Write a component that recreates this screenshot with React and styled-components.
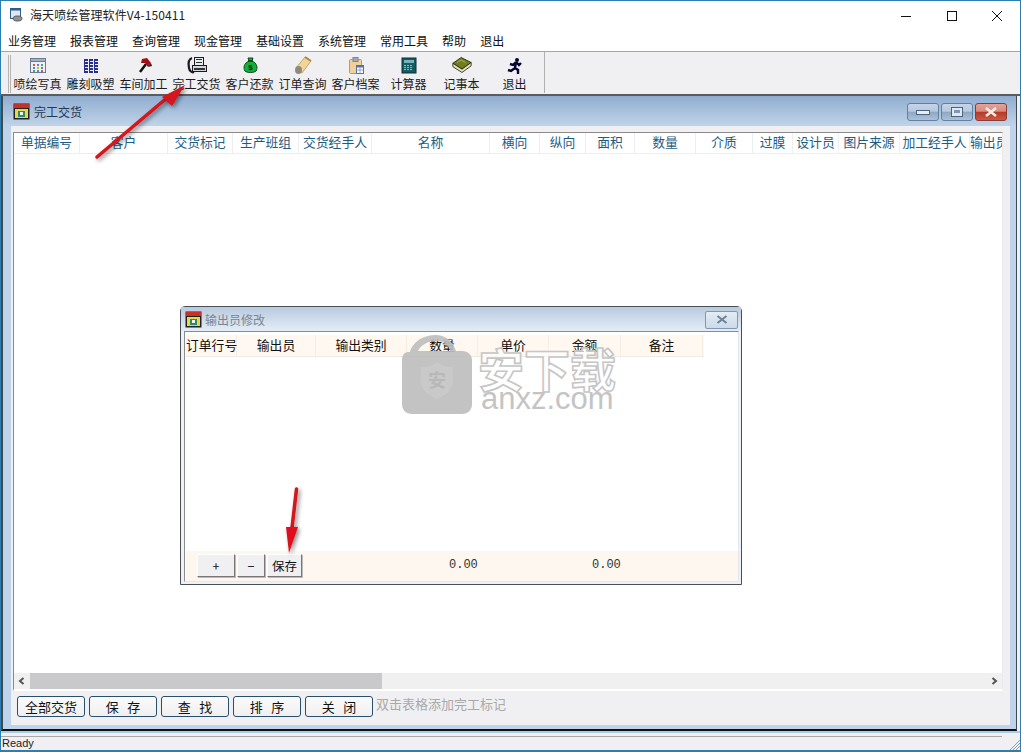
import React from "react";
import styled, { createGlobalStyle } from "styled-components";

const Global = createGlobalStyle`
  html, body { margin: 0; padding: 0; overflow: hidden; background: #fff; }
  * { box-sizing: border-box; }
`;
const CJK = `"Noto Sans CJK SC", "Liberation Sans", sans-serif`;

const Win = styled.div`
  width: 1021px; height: 752px; border: 1px solid #2b7fb0; border-bottom-width: 2px;
  display: flex; flex-direction: column; font-family: ${CJK}; font-size: 12px; color: #111; background: #fff;
  position: relative; overflow: hidden;
`;
const TitleBar = styled.div`
  height: 29px; display: flex; align-items: center; padding: 0 0 2px 8px; flex: none;
`;
const AppTitle = styled.span`
  font-size: 12px; color: #222; letter-spacing: 0.1px; flex: 1; margin-left: 7px;
`;
const CaptionGroup = styled.div`
  display: flex; margin-right: 0; margin-top: 2px; flex: none;
`;
const Caption = styled.div`
  display: flex; align-items: center; width: 45.5px; justify-content: center; height: 29px; flex: none;
`;
const MenuBar = styled.div`
  height: 22px; display: flex; align-items: center; gap: 14px; padding: 0 0 1px 7px; border-bottom: 1px solid #a6a6a6; flex: none;
`;
const MenuItem = styled.span`
  font-size: 12px; color: #111;
`;
const Toolbar = styled.div`
  height: 44px; background: #f0eff2; border-bottom: 2px solid #5c5c5c; display: flex; align-items: stretch; padding-left: 7px; flex: none;
`;
const Grip = styled.div`
  width: 3px; margin: 3px 0 1px; border-left: 1px solid #b5b5b5; border-right: 1px solid #b5b5b5; flex: none;
`;
const ToolGroup = styled.div`
  display: flex; padding: 3px 0 0 0; border-right: 1px solid #b0b0b0; margin-bottom: 1px; width: 534px;
`;
const ToolButton = styled.div`
  width: 53px; display: flex; flex-direction: column; align-items: center; font-size: 12px; color: #1b1b1b; line-height: 16px; white-space: nowrap; flex: none;
  svg { display: block; height: 20px; margin-bottom: 1px; }
`;
const Mdi = styled.div`
  flex: 1; position: relative; min-height: 0; background: #f0eff2; padding: 0 3px 0 0;
`;
const Child = styled.div`
  height: 100%; display: flex; flex-direction: column; border-left: 2px solid #45484c; border-right: 1px solid #45484c; border-bottom: 2px solid #111;
  background: #bdd4ea;
  padding: 0 6px 4px 8px;
`;
const ChildTitle = styled.div`
  height: 30px; margin: 0 -6px 0 -8px; padding: 1px 9px 0 10px; display: flex; align-items: center; flex: none;
  background: linear-gradient(#90add0, #c0d4e8);
`;
const ChildName = styled.span`
  font-size: 12px; color: #1f3a58; flex: 1; margin-left: 4px;
`;
const WinBtn = styled.div`
  width: 32px; height: 18px; margin-left: 2px; border: 1px solid ${p => (p.$close ? "#8e3a30" : "#64809f")}; border-radius: 3px;
  background: ${p => p.$close ? "linear-gradient(#e2a497 0, #d98c7c 45%, #b83a26 52%, #c85a48 100%)" : "linear-gradient(#c6d5e6 0, #b6c9df 45%, #8ea8c4 52%, #adc1d8 100%)"};
  display: flex; align-items: center; justify-content: center; flex: none;
`;
const ChildBody = styled.div`
  flex: 1; min-height: 0; background: #f0eff2; display: flex; flex-direction: column; padding: 6px 7px 0 2px;
`;
const TableFrame = styled.div`
  flex: none; height: 559px; background: #fff; border-top: 1px solid #8a8a8a; border-left: 1px solid #8a8a8a; border-right: 1px solid #e9e9e9; border-bottom: 2px solid #fff;
  display: flex; flex-direction: column; overflow: hidden;
`;
const HeadRow = styled.div`
  display: flex; height: 21px; border-bottom: 1px solid #eceff2; flex: none;
`;
const HeadCell = styled.div`
  width: ${p => p.$w}px; flex: none; overflow: hidden; white-space: nowrap; text-align: center; line-height: 18px;
  font-size: 12.8px; color: #1d5c82; border-right: 1px solid #eceff2;
`;
const TableBlank = styled.div` flex: 1; `;
const HScroll = styled.div`
  height: 16px; background: #f0f0f0; display: flex; align-items: center; flex: none;
`;
const ScrollArrow = styled.div`
  width: 16px; height: 16px; flex: none; display: flex; align-items: center; justify-content: center;
`;
const ScrollTrack = styled.div` flex: 1; height: 16px; `;
const ScrollThumb = styled.div` width: 352px; height: 16px; background: #c9c8cb; `;
const ButtonRow = styled.div`
  display: flex; align-items: flex-start; gap: 4px; padding: 5px 0 0 4px; flex: 1;
`;
const ActionBtn = styled.div`
  width: 68px; height: 21px; background: linear-gradient(#fbfbfb, #f1eff0); border: 1px solid #28506e; border-radius: 3px;
  font-size: 13px; line-height: 19px; text-align: center; color: #111; white-space: pre; flex: none;
`;
const Hint = styled.span`
  color: #a9a9a9; font-size: 13px; line-height: 16px; margin-left: -1px; letter-spacing: 0;
`;
const Status = styled.div`
  height: 19px; background: #f0eff2; padding: 3px 0 0 0; flex: none; display: flex; flex-direction: column; border-top: 2px solid #a9cde6;
`;
const StatusInner = styled.div`
  width: 1001px; border-top: 1px solid #a8a8a8; font: 11px/13px "Liberation Sans", sans-serif; color: #222; padding: 0 0 0 1px;
`;
const Resize = styled.svg`
  position: absolute; right: 0; bottom: 0;
`;

/* Dialog floats over the MDI desktop */
const Dialog = styled.div`
  position: absolute; left: 179px; top: 210px; width: 562px; height: 279px;
  border: 1px solid #4a4f56; border-radius: 5px 5px 0 0; background: #eef1f5; display: flex; flex-direction: column; padding: 0 2px 2px 3px;
`;
const DialogTitle = styled.div`
  height: 24px; display: flex; align-items: center; padding: 1px 3px 0 4px; flex: none;
  margin: 0 -2px 0 -3px;
  background: linear-gradient(#b8cadf, #e4edf6);
`;
const DialogName = styled.span`
  flex: 1; color: #7a8592; font-size: 12px; margin-left: 3px;
`;
const DialogClose = styled.div`
  width: 33px; height: 18px; border: 1px solid #7f99b4; border-radius: 2px; background: linear-gradient(#e4ecf4, #cddaea); display: flex; align-items: center; justify-content: center; flex: none;
`;
const DialogBody = styled.div`
  flex: 1; min-height: 0; background: #fff; border: 1px solid #8c8c8c; border-right-color: #e3e8ee; border-bottom-color: #e3e8ee; display: flex; flex-direction: column; padding: 3px 0 0 1px;
`;
const DHead = styled.div`
  display: flex; height: 22px; background: #fef8f0; flex: none; width: 518px; border-bottom: 1px solid #efeae2;
`;
const DCell = styled.div`
  width: ${p => p.$w}px; flex: none; text-align: center; font-size: 12.8px; color: #111; line-height: 19px; border-right: 1px solid #f4eee4; white-space: nowrap;
`;
const DBlank = styled.div` flex: 1; `;
const DFoot = styled.div`
  height: 30px; background: #fdf7f0; display: flex; align-items: flex-start; padding: 3px 0 0 11px; flex: none; position: relative;
`;
const SmallBtn = styled.div`
  width: ${p => p.$w}px; height: 23px; margin-right: 2px; background: #f0eff1; border-top: 1px solid #fff; border-left: 1px solid #fff; border-right: 1px solid #777; border-bottom: 1px solid #777;
  box-shadow: 1px 1px 0 #bbb; font-size: 12.5px; line-height: 21px; text-align: center; color: #111; flex: none;
`;
const Sum = styled.span`
  font: 12px/22px "Liberation Mono", monospace; color: #333; width: ${p => p.$w}px; margin-left: ${p => p.$m}px; flex: none; letter-spacing: 0;
`;

/* Watermark and annotation arrows lie over everything */
const Overlay = styled.svg`
  position: absolute; left: -1px; top: -1px; pointer-events: none;
`;
const WatermarkText = styled.div`
  position: absolute; left: 475px; top: 341px; width: 142px; text-align: center; pointer-events: none;
  font: 700 46px/50px ${CJK}; color: rgba(255,255,255,.7); -webkit-text-stroke: 1.6px #c6c6c6; white-space: nowrap;
`;
const WatermarkUrl = styled.div`
  position: absolute; left: 480px; top: 378px; width: 136px; pointer-events: none;
  font: 400 31px/40px "Liberation Sans", sans-serif; color: #c4c4c4; white-space: nowrap;
`;

const I = ({ children, w = 22, h = 20, vw, vh }) => <svg width={w} height={h} viewBox={`0 0 ${vw || w} ${vh || h}`}>{children}</svg>;

const IconGrid = () => (
  <I>
    <rect x="3.500" y="3.500" width="15" height="14" fill="#eef1f6" stroke="#6c7d92" />
    <rect x="3.500" y="3.500" width="15" height="3" fill="#9fb0c8" stroke="#6c7d92" />
    {[[6,9,"#d2574a"],[10,9,"#4b8ac6"],[14,9,"#59a65a"],[6,12,"#4b8ac6"],[10,12,"#e2b03c"],[14,12,"#4b8ac6"],[6,15,"#59a65a"],[10,15,"#4b8ac6"],[14,15,"#d2574a"]].map(([x,y,c],i)=><rect key={i} x={x} y={y} width="2" height="2" fill={c}/>)}
  </I>
);
const IconBlocks = () => (
  <I>
    {[4,9,14].map(x=>[4,7,10,13,16].map(y=><rect key={x+"-"+y} x={x} y={y} width="4" height="2" fill="#26308c"/>))}
    {[4,9,14].map(x=><rect key={x} x={x} y="4" width="1" height="14" fill="#26308c"/>)}
  </I>
);
const IconAxe = () => (
  <I>
    <path d="M7 17 L13 9" stroke="#111" strokeWidth="2.500" />
    <path d="M9 4 L14 3 L18 8 L15 12 L12 8 L8 8Z" fill="#9c1016" />
    <path d="M15 12 L18 8 L19 11Z" fill="#222" />
  </I>
);
const IconPhone = () => (
  <I>
    <path d="M6 3 C3 4 2 8 3 13 C3.500 16 6 18 8 17" fill="none" stroke="#1b1b1b" strokeWidth="2.200" />
    <rect x="8.500" y="2.500" width="9" height="8" fill="#e8edf2" stroke="#1b1b1b" />
    <rect x="10" y="4" width="6" height="1" fill="#333" /><rect x="10" y="7" width="6" height="1" fill="#333" />
    <rect x="6.500" y="10.500" width="14" height="6" fill="#cfd6dc" stroke="#1b1b1b" />
    <rect x="8" y="13" width="11" height="2" fill="#333" />
  </I>
);
const IconMoney = () => (
  <I>
    <path d="M9 3 L14 3 L13 6 C18 8 19 13 17 16 C15 18 8 18 6 16 C4 13 5 8 10 6Z" fill="#13b13a" stroke="#0c4a1a" />
    <path d="M9 6 H14" stroke="#0c3a14" strokeWidth="1.500" />
    <text x="11.500" y="15" fontSize="8" fontWeight="700" textAnchor="middle" fill="#03280c" fontFamily="Liberation Sans">$</text>
  </I>
);
const IconRoll = () => (
  <I>
    <path d="M4 13 L13 2 L19 6 L10 18Z" fill="#f0d596" stroke="#c7a86a" />
    <path d="M13 2 L19 6" stroke="#a8874c" strokeWidth="2" />
    <ellipse cx="6.500" cy="15" rx="3.500" ry="4" fill="#8e8a80" />
  </I>
);
const IconClipboard = () => (
  <I>
    <rect x="4.500" y="4.500" width="12" height="14" rx="1" fill="#f1d09a" stroke="#b69a74" />
    <rect x="8" y="2.500" width="5" height="4" fill="#9fa9bb" stroke="#7a8698" />
    <rect x="11.500" y="10.500" width="7" height="8" fill="#fff" stroke="#5373a8" />
    <rect x="11.500" y="10.500" width="7" height="2" fill="#5373a8" />
    <path d="M15 12 V18 M12 15 H18" stroke="#8fa5c8" />
  </I>
);
const IconCalc = () => (
  <I>
    <rect x="4" y="3" width="14" height="15" fill="#155b64" stroke="#0a3036" />
    <rect x="6" y="5" width="10" height="3" fill="#79b3b8" />
    {[6,9,12].map(x=>[10,12,14].map(y=><rect key={x+"-"+y} x={x} y={y} width="2" height="1" fill="#8cc2c6"/>))}
  </I>
);
const IconBook = () => (
  <I w={20} h={20} vw={24} vh={24}>
    <path d="M1 10 L11 3 L23 9 L12 17Z" fill="#6f7d1e" stroke="#1e2408" />
    <path d="M1 10 L1 14 L12 21 L23 13 L23 9 L12 17Z" fill="#e4dfc2" stroke="#1e2408" />
    <path d="M6 9 L11 6 L16 9" stroke="#b6c04a" fill="none" />
  </I>
);
const IconRun = () => (
  <I>
    <circle cx="13" cy="5" r="2" fill="#05052e" />
    <path d="M12 7 L9 10 L6 9 M12 7 L15 10 L17 8 M12 7 L11 13 L7 16 L4 15 M11 13 L14 15 L14 19" stroke="#05052e" strokeWidth="2.400" fill="none" />
  </I>
);
const ChildIcon = ({ s = 17 }) => (
  <svg width={s} height={s} viewBox="0 0 17 17" style={{ flex: "none" }}>
    <rect x="0.500" y="0.500" width="16" height="16" fill="#222" />
    <rect x="1" y="1" width="15" height="4" fill="#c8302a" />
    <rect x="2" y="6" width="13" height="9" fill="#e3d94a" />
    <rect x="5" y="8" width="7" height="6" fill="#2c8a72" />
    <rect x="7" y="9" width="3" height="3" fill="#f3f3f3" />
  </svg>
);
const AppIcon = () => (
  <svg width="14" height="14" viewBox="0 0 14 14" style={{ flex: "none" }}>
    <rect x="1.500" y="0.500" width="10" height="10" fill="#dfe8f2" stroke="#2f5d8c" />
    <rect x="1.500" y="0.500" width="10" height="2" fill="#2f5d8c" />
    <ellipse cx="8.500" cy="10.500" rx="4.500" ry="2.500" fill="#8f9398" stroke="#555" />
  </svg>
);

const tools = [
  ["喷绘写真", <IconGrid />], ["雕刻吸塑", <IconBlocks />], ["车间加工", <IconAxe />], ["完工交货", <IconPhone />],
  ["客户还款", <IconMoney />], ["订单查询", <IconRoll />], ["客户档案", <IconClipboard />], ["计算器", <IconCalc />],
  ["记事本", <IconBook />], ["退出", <IconRun />],
];
const menus = ["业务管理","报表管理","查询管理","现金管理","基础设置","系统管理","常用工具","帮助","退出"];
const cols = [["单据编号",66],["客户",88],["交货标记",65],["生产班组",66],["交货经手人",73],["名称",118],["横向",50],["纵向",46],["面积",49],["数量",61],["介质",57],["过膜",40],["设计员",46],["图片来源",61],["加工经手人",70],["输出员",33]];
const dcols = [["订单行号",51],["输出员",79],["输出类别",91],["数量",71],["单价",71],["金额",72],["备注",82]];
const actions = ["全部交货","保   存","查   找","排   序","关   闭"];

export default function App() {
  return (
    <Win>
      <Global />
      <TitleBar>
        <AppIcon />
        <AppTitle>海天喷绘管理软件V4-150411</AppTitle>
        <CaptionGroup>
          <Caption><svg width="12" height="12"><path d="M1 6.500H11" stroke="#111" /></svg></Caption>
          <Caption><svg width="12" height="12"><rect x="1.500" y="1.500" width="9" height="9" fill="none" stroke="#111" /></svg></Caption>
          <Caption><svg width="12" height="12"><path d="M1 1L11 11M11 1L1 11" stroke="#111" /></svg></Caption>
        </CaptionGroup>
      </TitleBar>
      <MenuBar>{menus.map((m, i) => <MenuItem key={i}>{m}</MenuItem>)}</MenuBar>
      <Toolbar>
        <Grip />
        <ToolGroup>
          {tools.map(([t, ic]) => <ToolButton key={t}>{ic}{t}</ToolButton>)}
        </ToolGroup>
      </Toolbar>
      <Mdi>
        <Child>
          <ChildTitle>
            <ChildIcon />
            <ChildName>完工交货</ChildName>
            <WinBtn><svg width="14" height="8"><rect x="0.500" y="2.500" width="13" height="4" fill="#e6ecf3" stroke="#4d6480" /></svg></WinBtn>
            <WinBtn><svg width="12" height="10"><rect x="0.500" y="0.500" width="11" height="9" fill="#dfe7f0" stroke="#4d6480" /><rect x="3" y="3" width="6" height="3" fill="#7f97b4" /></svg></WinBtn>
            <WinBtn $close><svg width="14" height="10"><path d="M2 1L12 9M12 1L2 9" stroke="#f4eee8" strokeWidth="2.500" /></svg></WinBtn>
          </ChildTitle>
          <ChildBody>
            <TableFrame>
              <HeadRow>{cols.map(([t, w]) => <HeadCell key={t} $w={w}>{t}</HeadCell>)}</HeadRow>
              <TableBlank />
              <HScroll>
                <ScrollArrow><svg width="8" height="8"><path d="M5.500 1L2 4L5.500 7" fill="none" stroke="#555" strokeWidth="2" /></svg></ScrollArrow>
                <ScrollTrack><ScrollThumb /></ScrollTrack>
                <ScrollArrow><svg width="8" height="8"><path d="M2.500 1L6 4L2.500 7" fill="none" stroke="#555" strokeWidth="2" /></svg></ScrollArrow>
              </HScroll>
            </TableFrame>
            <ButtonRow>
              {actions.map(a => <ActionBtn key={a}>{a}</ActionBtn>)}
              <Hint>双击表格添加完工标记</Hint>
            </ButtonRow>
          </ChildBody>
        </Child>
        <Dialog>
          <DialogTitle>
            <ChildIcon />
            <DialogName>输出员修改</DialogName>
            <DialogClose><svg width="12" height="9"><path d="M1.500 1L10.500 8M10.500 1L1.500 8" stroke="#6d8296" strokeWidth="2" /></svg></DialogClose>
          </DialogTitle>
          <DialogBody>
            <DHead>{dcols.map(([t, w]) => <DCell key={t} $w={w}>{t}</DCell>)}</DHead>
            <DBlank />
            <DFoot>
              <SmallBtn $w={38}>+</SmallBtn>
              <SmallBtn $w={28}>−</SmallBtn>
              <SmallBtn $w={35}>保存</SmallBtn>
              <Sum $w={30} $m={145}>0.00</Sum>
              <Sum $w={30} $m={113}>0.00</Sum>
            </DFoot>
          </DialogBody>
        </Dialog>
      </Mdi>
      <Status><StatusInner>Ready</StatusInner></Status>
      <Resize width="12" height="12" viewBox="0 0 12 12">
        <path d="M12 2L2 12M12 5L5 12M12 8L8 12" stroke="#9a9a9a" />
      </Resize>
      <Overlay width="1021" height="752" viewBox="0 0 1021 752">
        <defs>
          <filter id="sh" x="-30%" y="-30%" width="160%" height="160%">
            <feDropShadow dx="2" dy="2" stdDeviation="2" floodColor="#000" floodOpacity="0.45" />
          </filter>
        </defs>
        <path d="M436 335 C416 335 410 350 410 352 L408 352 C404 352 402 356 402 360 V404 C402 410 406 414 412 414 H462 C468 414 472 410 472 404 V360 C472 355 468 351 462 351 L456 351 C454 345 448 335 436 335Z M436 341 C445 341 449 346 450 351 H418 C420 346 427 341 436 341Z" fill="#bdbdbd" fillOpacity="0.9" fillRule="evenodd" />
        <path d="M437 362 C430 367 425 367 421 367 V381 C421 391 430 396 437 399 C444 396 453 391 453 381 V367 C449 367 444 367 437 362Z" fill="#c9c9c9" />
        <text x="437" y="387" fontSize="18" fontWeight="700" textAnchor="middle" fill="#b8b8b8" fontFamily="Noto Sans CJK SC">安</text>
        <path d="M97 157 L168 97 M296.500 489 L292 528" stroke="#d5131a" strokeWidth="3.500" strokeLinecap="round" filter="url(#sh)" />
        <path d="M185 85 L162 97 L172 106Z" fill="#d5131a" filter="url(#sh)" />
        <path d="M289 553 L286 527 L298 527Z" fill="#e0101a" filter="url(#sh)" />
      </Overlay>
      <WatermarkText>安下载</WatermarkText>
      <WatermarkUrl>anxz.com</WatermarkUrl>
    </Win>
  );
}
